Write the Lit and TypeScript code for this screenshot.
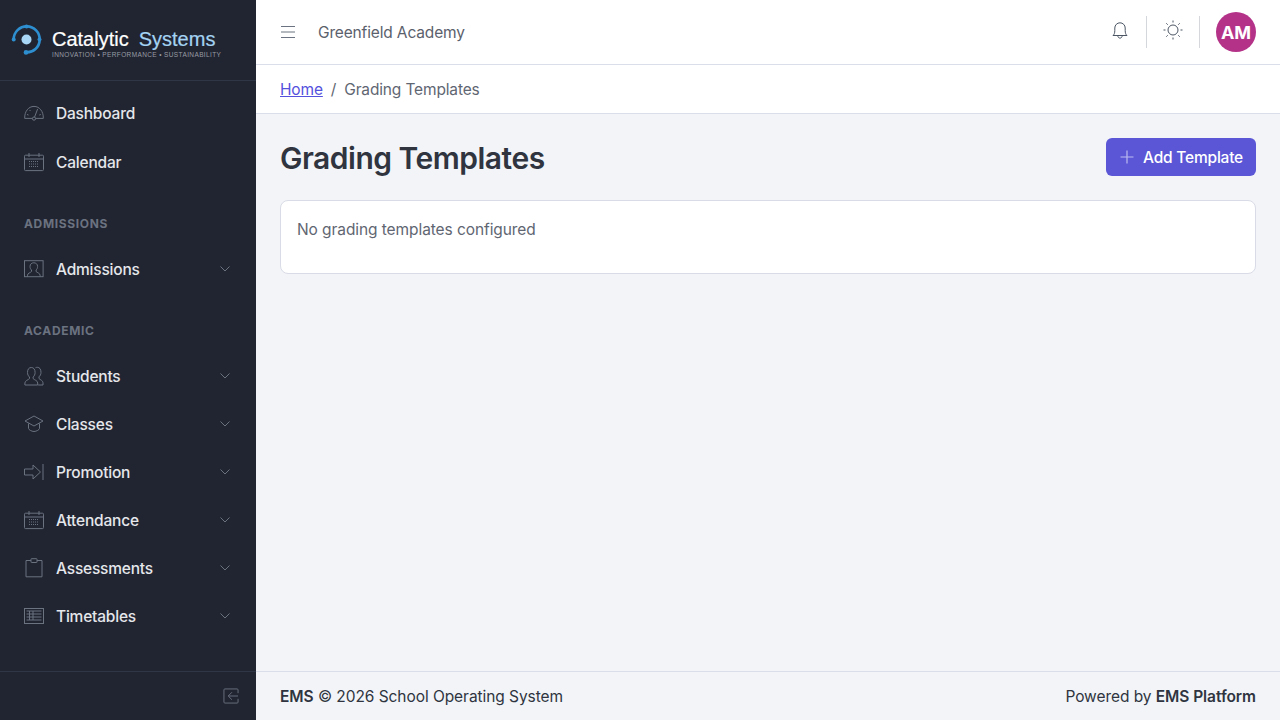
import { LitElement, html, css, svg } from "lit";
import { customElement } from "lit/decorators.js";

const calendar = svg`<rect x=".5" y="3.2" width="19" height="15.4" rx="1"/><path d="M.5 7h19M5 1v4M15 1v4"/><path class="dots" d="M5 9.5h10M5 12h10M5 14.5h10"/>`;
const icons: Record<string, unknown> = {
  gauge: svg`<path d="M.7 15.4C.4 8.5 4.5 3.4 10 3.4s9.600 5.100 9.300 12H11.500M8.500 15.400H.7"/><circle cx="10" cy="15.600" r="1.600"/><path d="M10.600 14l3-8M3 11.500l1.500.5M5.500 7l1 1M16.800 11.500l-1.500.5"/>`,
  calendar,
  admissions: svg`<rect x=".5" y="1.700" width="18.600" height="16" /><path d="M3.500 17.700v-1.500c0-2 3-2.500 4-3.700v-1.500c-1-1-1.500-2-1.500-3.500 0-2.500 1.800-3.700 3.800-3.700s3.800 1.200 3.800 3.700c0 1.500-.5 2.500-1.500 3.500v1.500c1 1.200 4 1.700 4 3.700v1.500"/>`,
  students: svg`<path d="M.9 19v-2c0-2.500 3.500-3 4.600-4.500v-1.500C4.300 10 3.500 8.500 3.500 6.500 3.500 3.200 5 1.500 7.300 1.500s3.800 1.700 3.800 5c0 2-.8 3.500-2 4.500v1.500c1.100 1.500 4.600 2 4.600 4.500v2zM11.500 1.700c.6-.3 1.200-.4 1.800-.4 2.300 0 3.700 1.900 3.700 5 0 2-.8 3.500-2 4.500v1.700c1.100 1.300 4 2 4 4.300V19h-4.800"/>`,
  classes: svg`<path d="M10 2l9 5-9 5-9-5zM4.500 9.500v5c0 1 3 3 5.500 3s5.500-2 5.500-3v-5"/>`,
  promotion: svg`<path d="M.5 7H9V3l7.500 7L9 17v-4H.5zM19 2v16"/>`,
  assessments: svg`<path d="M7 2.500H2v16.300h16V2.500h-5"/><rect x="7" y=".7" width="6" height="3.800" rx=".5"/>`,
  timetables: svg`<rect x=".5" y="2.500" width="19" height="15" /><path d="M2.500 5h15M2.500 8h15M2.500 11h15M2.500 14h15M5.500 5v9M9 5v9" />`,
};

const chevron = html`<svg class="chev" viewBox="0 0 10 6"><path d="M.5.5 5 5 9.500.5"/></svg>`;

@customElement("app-root")
export class AppRoot extends LitElement {
  static styles = css`
    :host { display: block; font-family: Inter, "Liberation Sans", sans-serif; font-size: 15.500px; letter-spacing: -.15px; }
    * { box-sizing: border-box; }
    .app { display: flex; width: 1280px; height: 720px; overflow: hidden; background: #f2f4f8; }
    .side { width: 256px; flex: none; background: #212531; display: flex; flex-direction: column; }
    .brand { height: 81px; flex: none; border-bottom: 1px solid #2f3645; display: flex; align-items: center; padding: 0 0 1px 10px; gap: 9px; }
    .logo { width: 33px; height: 33px; flex: none; }
    .brandtext { display: flex; flex-direction: column; font-family: "Liberation Sans", Arial, sans-serif; letter-spacing: 0; margin-top: 7px; }
    .name { display: flex; gap: 10px; font-size: 20px; line-height: 22px; color: #fff; -webkit-text-stroke: .2px currentColor; }
    .name span { color: #a4d3f3; }
    .tag { font-size: 6.500px; line-height: 9px; letter-spacing: .38px; color: #989ca5; white-space: nowrap; }
    nav { flex: 1; display: flex; flex-direction: column; padding-top: 8px; }
    .item { height: 48px; flex: none; display: flex; align-items: center; padding: 0 24px; gap: 12px; color: #e5e7eb; font-weight: 450; letter-spacing: -.2px; }
    .item.gap { margin-top: 1px; }
    .item .label { flex: 1; }
    .ic { width: 20px; height: 20px; flex: none; overflow: visible; fill: none; stroke: #6b7280; stroke-width: 1; }
    .ic .dots { stroke-dasharray: 1 1; }
    .chev { width: 10px; height: 6px; fill: none; stroke: #6b7280; stroke-width: 1; margin-right: 2px; overflow: visible; }
    .section { height: 59px; flex: none; display: flex; align-items: flex-end; padding: 0 24px 12px; font-size: 12px; line-height: 18px; font-weight: 700; color: #6b7280; letter-spacing: .65px; }
    .side-foot { height: 49px; flex: none; border-top: 1px solid #2f3645; display: flex; align-items: center; justify-content: flex-end; padding: 0 17px 0 0; }
    .collapse { width: 16px; height: 16px; fill: none; stroke: #6b7280; stroke-width: 1; }
    .content { flex: 1; min-width: 0; display: flex; flex-direction: column; }
    .top { height: 65px; flex: none; background: #fff; border-bottom: 1px solid #d9deea; display: flex; align-items: center; padding: 0 24px; }
    .burger { width: 16px; height: 14px; stroke: #6b7280; stroke-width: 1; fill: none; margin-right: 22px; }
    .school { flex: 1; color: #5b616c; }
    .tools { display: flex; align-items: center; }
    .bell { width: 20px; height: 20px; fill: none; stroke: #4b5563; stroke-width: 1; margin-bottom: 4px; }
    .sun { width: 20px; height: 20px; fill: none; stroke: #4b5563; stroke-width: 1; margin-bottom: 4px; }
    .div { width: 1px; height: 32px; background: #d5d7dc; margin: 0 16px; }
    .avatar { width: 40px; height: 40px; border-radius: 50%; background: #b43389; color: #fff; display: flex; align-items: center; justify-content: center; font-weight: 700; font-size: 18px; letter-spacing: 0; }
    .crumbs { height: 49px; flex: none; background: #fff; border-bottom: 1px solid #d9deea; display: flex; align-items: center; gap: 8px; padding: 0 24px; color: #5f6672; }
    .crumbs a { color: #5451dd; text-decoration: underline; }
    main { flex: 1; padding: 24px; display: flex; flex-direction: column; gap: 24px; }
    .head { display: flex; justify-content: space-between; align-items: center; height: 38px; }
    h1 { margin: 2px 0 0; font-size: 30px; line-height: 38px; font-weight: 600; color: #2f343f; letter-spacing: -.5px; }
    button { height: 38px; width: 150px; border: 0; border-radius: 6px; background: #5a56d6; color: #fff; font: 450 15.500px Inter, sans-serif; letter-spacing: -.2px; display: flex; align-items: center; justify-content: center; gap: 9px; padding: 0 0 0 1px; }
    .plus { width: 14px; height: 14px; stroke: #bcbbf0; stroke-width: 1.200; fill: none; }
    .card { height: 74px; background: #fff; border: 1px solid #d9dce6; border-radius: 8px; padding: 17px 16px 0; line-height: 24px; color: #5f6672; letter-spacing: -.08px; }
    footer { height: 49px; flex: none; border-top: 1px solid #d9deea; display: flex; align-items: center; justify-content: space-between; padding: 0 24px; color: #2f3440; letter-spacing: -.06px; }
    footer b { font-weight: 600; }
  `;

  private item(icon: string, label: string, expand = true, cls = "") {
    return html`<div class="item ${cls}"><svg class="ic" viewBox="0 0 20 20">${icons[icon]}</svg><span class="label">${label}</span>${expand ? chevron : ""}</div>`;
  }

  render() {
    return html`<div class="app">
      <aside class="side">
        <div class="brand">
          <svg class="logo" viewBox="0 0 33 33">
            <path d="M3.700 16.500A13 13 0 1 1 16 29.400" fill="none" stroke="#2e8fd0" stroke-width="2.600"/>
            <circle cx="3.700" cy="16.500" r="2" fill="#2e8fd0"/><circle cx="16" cy="29.400" r="2.300" fill="#2e8fd0"/><circle cx="16.500" cy="3.500" r="2" fill="#2e8fd0"/><circle cx="29.500" cy="16.500" r="2" fill="#2e8fd0"/>
            <circle cx="16.500" cy="16.500" r="5" fill="#a9d6f5"/>
          </svg>
          <div class="brandtext"><div class="name">Catalytic <span>Systems</span></div><div class="tag">INNOVATION • PERFORMANCE • SUSTAINABILITY</div></div>
        </div>
        <nav>
          ${this.item("gauge", "Dashboard", false)}
          ${this.item("calendar", "Calendar", false, "gap")}
          <div class="section">ADMISSIONS</div>
          ${this.item("admissions", "Admissions")}
          <div class="section">ACADEMIC</div>
          ${this.item("students", "Students")}
          ${this.item("classes", "Classes")}
          ${this.item("promotion", "Promotion")}
          ${this.item("calendar", "Attendance")}
          ${this.item("assessments", "Assessments")}
          ${this.item("timetables", "Timetables")}
        </nav>
        <div class="side-foot">
          <svg class="collapse" viewBox="0 0 17 16"><path d="M16 5V1.500a1 1 0 0 0-1-1H2a1 1 0 0 0-1 1v13a1 1 0 0 0 1 1h13a1 1 0 0 0 1-1V11"/><path d="M16 8H6M9.500 4 5.500 8l4 4"/></svg>
        </div>
      </aside>
      <div class="content">
        <header class="top">
          <svg class="burger" viewBox="0 0 16 14"><path d="M1 1.500h14M1 7h14M1 12.500h14"/></svg>
          <div class="school">Greenfield Academy</div>
          <div class="tools">
            <svg class="bell" viewBox="0 0 20 20"><path d="M3 15.500c1.200-1 1.800-2.500 1.800-5V8a5.200 5.200 0 0 1 10.400 0v2.500c0 2.500.6 4 1.800 5zM7.800 15.500c0 3.500 4.400 3.500 4.400 0"/></svg>
            <div class="div"></div>
            <svg class="sun" viewBox="0 0 20 20"><circle cx="10" cy="10" r="5"/><path d="M10 .5v2M10 17.500v2M.5 10h2M17.500 10h2M3.300 3.300l1.400 1.400M15.300 15.300l1.400 1.400M3.300 16.700l1.400-1.400M15.300 4.700l1.400-1.400"/></svg>
            <div class="div"></div>
            <div class="avatar">AM</div>
          </div>
        </header>
        <div class="crumbs"><a>Home</a><span>/</span><span>Grading Templates</span></div>
        <main>
          <div class="head"><h1>Grading Templates</h1><button><svg class="plus" viewBox="0 0 14 14"><path d="M7 .5v13M.5 7h13"/></svg>Add Template</button></div>
          <div class="card">No grading templates configured</div>
        </main>
        <footer><div><b>EMS</b> © 2026 School Operating System</div><div>Powered by <b>EMS Platform</b></div></footer>
      </div>
    </div>`;
  }
}
